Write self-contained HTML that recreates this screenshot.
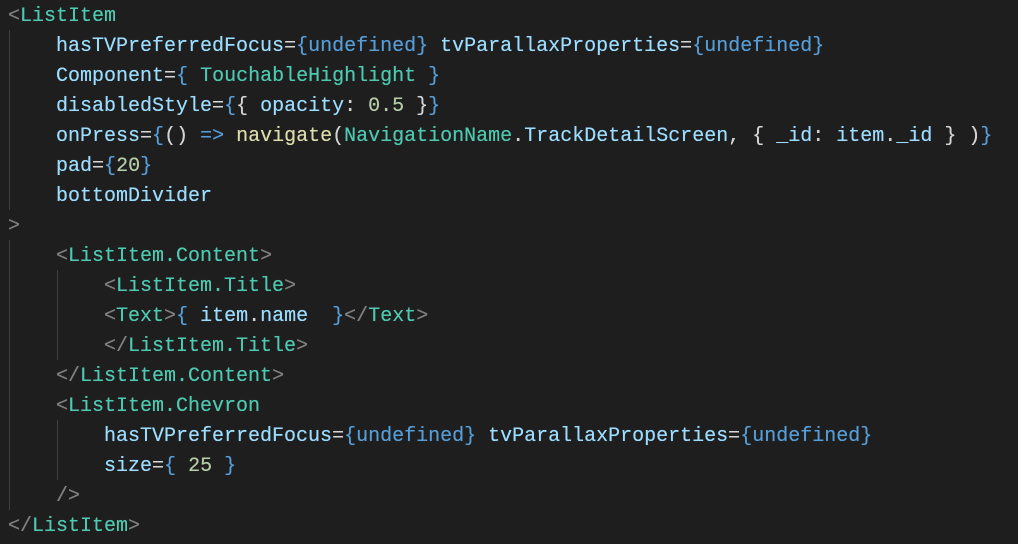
<!DOCTYPE html>
<html><head><style>
body{margin:0;background:#1e1e1e;width:1018px;height:544px;overflow:hidden;position:relative}
pre{margin:0;position:absolute;left:8px;top:2px;font:20px/30px "Liberation Mono",monospace;color:#d4d4d4;text-shadow:0 0 0.4px currentColor}
.g{color:#808080}.t{color:#4ec9b0}.a{color:#9cdcfe}.b{color:#569cd6}.n{color:#b5cea8}.f{color:#dcdcaa}
.l{position:absolute;width:1px;background:#404040}
</style></head><body>
<div class="l" style="left:9px;top:30px;height:180px"></div>
<div class="l" style="left:9px;top:240px;height:270px"></div>
<div class="l" style="left:57px;top:270px;height:90px"></div>
<div class="l" style="left:57px;top:420px;height:60px"></div>
<pre><span class="g">&lt;</span><span class="t">ListItem</span>
    <span class="a">hasTVPreferredFocus</span>=<span class="b">{undefined}</span> <span class="a">tvParallaxProperties</span>=<span class="b">{undefined}</span>
    <span class="a">Component</span>=<span class="b">{</span> <span class="t">TouchableHighlight</span> <span class="b">}</span>
    <span class="a">disabledStyle</span>=<span class="b">{</span>{ <span class="a">opacity</span>: <span class="n">0.5</span> }<span class="b">}</span>
    <span class="a">onPress</span>=<span class="b">{</span>() <span class="b">=&gt;</span> <span class="f">navigate</span>(<span class="t">NavigationName</span>.<span class="a">TrackDetailScreen</span>, { <span class="a">_id</span>: <span class="a">item</span>.<span class="a">_id</span> } )<span class="b">}</span>
    <span class="a">pad</span>=<span class="b">{</span><span class="n">20</span><span class="b">}</span>
    <span class="a">bottomDivider</span>
<span class="g">&gt;</span>
    <span class="g">&lt;</span><span class="t">ListItem.Content</span><span class="g">&gt;</span>
        <span class="g">&lt;</span><span class="t">ListItem.Title</span><span class="g">&gt;</span>
        <span class="g">&lt;</span><span class="t">Text</span><span class="g">&gt;</span><span class="b">{</span> <span class="a">item</span>.<span class="a">name</span>  <span class="b">}</span><span class="g">&lt;/</span><span class="t">Text</span><span class="g">&gt;</span>
        <span class="g">&lt;/</span><span class="t">ListItem.Title</span><span class="g">&gt;</span>
    <span class="g">&lt;/</span><span class="t">ListItem.Content</span><span class="g">&gt;</span>
    <span class="g">&lt;</span><span class="t">ListItem.Chevron</span>
        <span class="a">hasTVPreferredFocus</span>=<span class="b">{undefined}</span> <span class="a">tvParallaxProperties</span>=<span class="b">{undefined}</span>
        <span class="a">size</span>=<span class="b">{</span> <span class="n">25</span> <span class="b">}</span>
    <span class="g">/&gt;</span>
<span class="g">&lt;/</span><span class="t">ListItem</span><span class="g">&gt;</span></pre>
</body></html>
